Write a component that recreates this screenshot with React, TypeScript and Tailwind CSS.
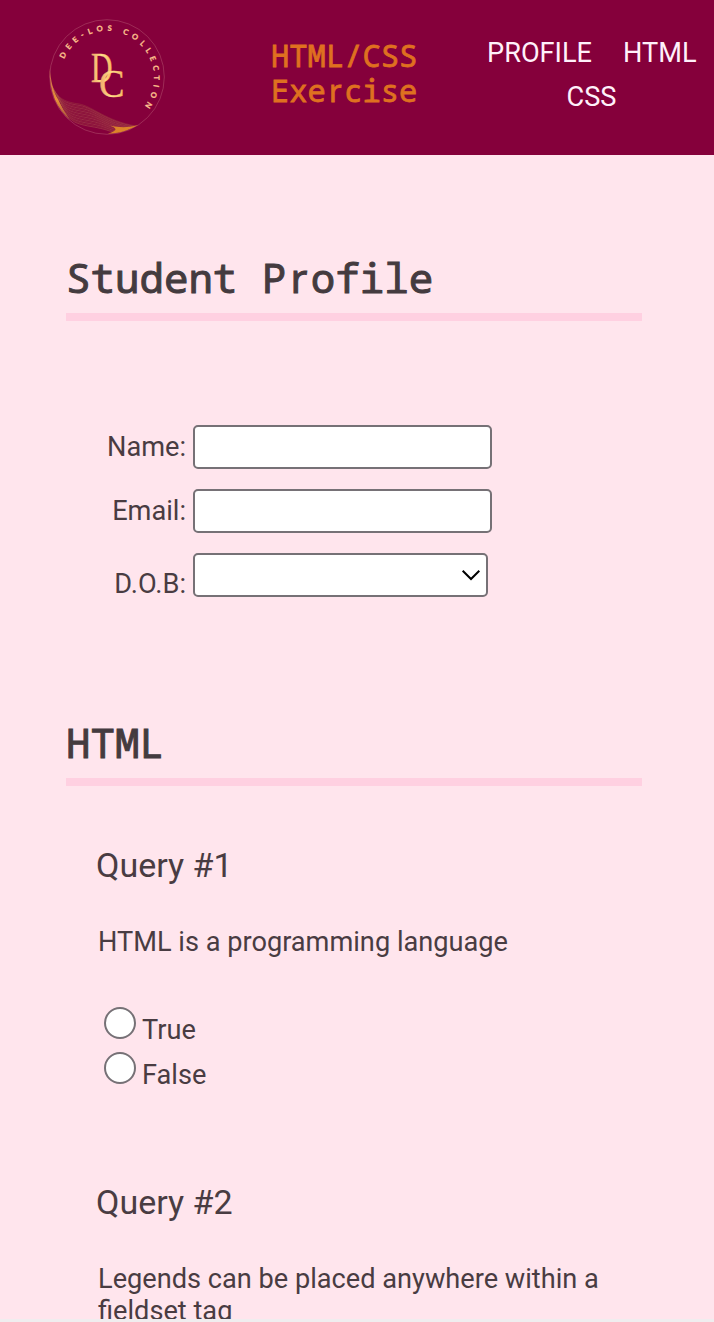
import React from "react";

const waves = Array.from({ length: 16 }, (_, i) => i);

function Logo() {
  return (
    <svg viewBox="0 0 118 118" className="h-[118px] w-[118px] shrink-0" aria-label="Dee-Los Collection">
      <defs>
        <linearGradient id="gold" x1="0" x2="1">
          <stop offset="0" stopColor="#f0a468" />
          <stop offset="0.5" stopColor="#ffe08a" />
          <stop offset="1" stopColor="#f5b45e" />
        </linearGradient>
        <linearGradient id="leftEdge" x1="0" y1="0" x2="0" y2="1">
          <stop offset="0" stopColor="#c05a50" />
          <stop offset="0.6" stopColor="#e6923a" />
          <stop offset="1" stopColor="#a85040" />
        </linearGradient>
        <path id="arc" d="M16.1 40.9 A47 47 0 1 1 95 90.2" />
      </defs>
      <circle cx="59" cy="59" r="57.3" fill="none" stroke="#a83d62" strokeWidth="0.7" />
      {waves.map((i) => (
        <path
          key={i}
          d={`M${3 + i * 1.1} ${66 + i * 2.2} C${10 + i} ${82 + i * 1.3} ${18 + i * 0.3} ${84 + i * 1.4} ${31 + i * 0.8} ${86 + i * 1.5} S${58 + i * 0.3} ${103 + i * 0.8} ${88 - i * 1.2} ${108 + i * 0.4}`}
          fill="none"
          stroke={i % 2 ? "#b26550" : "#a0443f"}
          strokeWidth="0.45"
        />
      ))}
      <path d="M1.6 50 C1 74 9 91 22 102 C17 94 13 88 10 81 C5 73 3 63 1.6 50Z" fill="url(#leftEdge)" />
      <path d="M62 107.5 C71 109.5 79 110 90 107 C80 113 70 115.6 60 115.6 C68 113 71 111 62 107.5Z" fill="#dc842a" />
      <text fill="#ffc48f" stroke="#ffc48f" strokeWidth="0.25" fontSize="7.6" fontWeight="700" className="font-['Lato',sans-serif]">
        <textPath href="#arc" textLength="158" lengthAdjust="spacing">DEE-LOS COLLECTION</textPath>
      </text>
      <text x="43" y="64" fill="url(#gold)" stroke="url(#gold)" strokeWidth="0.4" fontSize="42" textLength="21.5" lengthAdjust="spacingAndGlyphs" className="font-['Liberation_Serif',serif]">D</text>
      <text x="51" y="79.3" fill="url(#gold)" stroke="url(#gold)" strokeWidth="0.4" fontSize="39" textLength="25.5" lengthAdjust="spacingAndGlyphs" className="font-['Liberation_Serif',serif]">C</text>
    </svg>
  );
}

function PlainR() {
  return <span className="ml-[0.1em] font-['Noto_Sans',sans-serif] tracking-[0.087em]">r</span>;
}

function Heading({ children }: { children: React.ReactNode }) {
  return (
    <h2 className="h-[66px] border-b-8 border-[#ffd0e1] font-['Noto_Sans_Mono','DejaVu_Sans_Mono',monospace] text-[40.8px] leading-[44px] whitespace-pre text-[#443b3f] [-webkit-text-stroke:1px_#443b3f]">
      {children}
    </h2>
  );
}

function Radio({ label }: { label: string }) {
  return (
    <label className="flex h-[45px] gap-1.5">
      <input type="radio" name="q1" className="h-8 w-8 appearance-none rounded-full border-2 border-[#767176] bg-white" />
      <span className="pt-[7px] leading-8">{label}</span>
    </label>
  );
}

export default function App() {
  return (
    <div className="flex h-[1322px] w-[714px] flex-col overflow-hidden bg-[#ffe5ed] font-['Roboto',sans-serif] text-[27.18px] text-[#493c42]">
      <header className="flex h-[155px] shrink-0 bg-[#85003b] pt-[18px] pl-12">
        <Logo />
        <h1 className="ml-[105px] w-[150px] pt-5 font-['Noto_Sans_Mono','DejaVu_Sans_Mono',monospace] text-[30.5px] leading-[35px] text-[#df7020] [-webkit-text-stroke:0.8px_#df7020]">
          <span className="block">HTML/CSS</span>
          <span className="block">Exe<PlainR />cise</span>
        </h1>
        <nav className="ml-[66px] flex w-[211px] flex-col pt-[13px] leading-[44px] text-[#fff0fa]">
          <div className="flex gap-[31px]">
            <a>PROFILE</a>
            <a>HTML</a>
          </div>
          <a className="mr-0.5 self-center">CSS</a>
        </nav>
      </header>
      <main className="h-[1164px] shrink-0 overflow-hidden pt-[100px] pr-[72px] pl-[66px]">
        <Heading>Student P<PlainR />ofile</Heading>
        <form className="mt-[104px] flex flex-col gap-5">
          <label className="flex h-11 items-center gap-[7px]">
            <span className="w-[120px] text-right">Name:</span>
            <input className="h-11 w-[299px] rounded-[5px] border-2 border-[#767176] bg-white" />
          </label>
          <label className="flex h-11 items-center gap-[7px]">
            <span className="w-[120px] text-right">Email:</span>
            <input className="h-11 w-[299px] rounded-[5px] border-2 border-[#767176] bg-white" />
          </label>
          <label className="flex h-11 gap-[7px]">
            <span className="w-[120px] pt-[15px] text-right leading-8">D.O.B:</span>
            <span className="flex h-11 w-[295px] items-center justify-end rounded-[5px] border-2 border-[#767176] bg-white pr-[5px]">
              <svg viewBox="0 0 20 12" className="h-3 w-5" fill="none" stroke="#000" strokeWidth="2">
                <path d="M1.7 1.8 L10 10 L18.3 1.8" />
              </svg>
            </span>
          </label>
        </form>
        <div className="mt-[123px]">
          <Heading>HTML</Heading>
        </div>
        <section className="mt-[59px] ml-[30px]">
          <h3 className="text-[34px] leading-10">Query #1</h3>
          <p className="mt-[41px] ml-0.5 leading-8">HTML is a programming language</p>
          <div className="mt-[49px] ml-2">
            <Radio label="True" />
            <Radio label="False" />
          </div>
        </section>
        <section className="mt-[85px] ml-[30px]">
          <h3 className="text-[34px] leading-10">Query #2</h3>
          <p className="mt-[41px] ml-0.5 w-[520px] leading-8">Legends can be placed anywhere within a fieldset tag</p>
        </section>
      </main>
      <div className="h-[3px] shrink-0 bg-[#f0edef]" />
    </div>
  );
}
